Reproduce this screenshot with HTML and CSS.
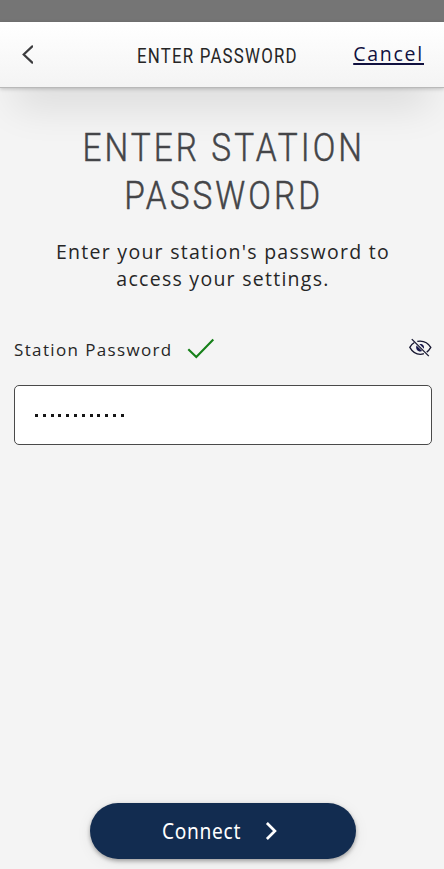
FILE: index.html
```html
<!DOCTYPE html>
<html lang="en">
<head>
<meta charset="utf-8">
<meta name="viewport" content="width=device-width, initial-scale=1">
<title>Enter Password</title>
<link rel="stylesheet" href="styles.css">
</head>
<body>
<div class="screen">
  <div class="status-bar"></div>
  <header class="nav">
    <svg class="back" viewBox="0 0 12 20" width="12" height="20"><path d="M11.3 1.4 2.7 9.5 11.3 17.6"/></svg>
    <div class="nav-title"><span class="nav-text">ENTER PASSWORD</span></div>
    <a class="cancel">Cancel</a>
  </header>
  <main class="content">
    <h1 class="heading"><span class="line">ENTER STATION</span><span class="line">PASSWORD</span></h1>
    <p class="intro"><span>Enter your station's password to</span><br><span>access your settings.</span></p>
    <div class="label-row">
      <label class="label">Station Password</label>
      <svg class="check" viewBox="0 0 28 22" width="28" height="22"><path d="M1.3 11.2 9.3 19.1 26.3 1.5"/></svg>
      <svg class="eye" viewBox="0 0 24 20" width="24" height="20">
        <path d="M6.400 4.500C4.500 5.500 2.900 7.100 1.800 9.400 4.300 13.800 7.800 16.300 12.300 16.300c1.300 0 2.400-.2 3.600-.6M9.300 3.300c6-1 10.700 1.300 13.500 6.100-1.200 2.100-2.400 3.500-4.100 4.700"/>
        <path d="M8.500 7.400 14.200 13.100C10.500 14.500 7 11.300 8.500 7.400ZM11.300 6 16 10.700C16.600 7.500 14.500 5.500 11.300 6Z" class="iris"/>
        <path d="M3.800 1.100 20.800 18.100"/>
      </svg>
    </div>
    <div class="field"><div class="dots"><i></i><i></i><i></i><i></i><i></i><i></i><i></i><i></i><i></i><i></i><i></i><i></i></div></div>
  </main>
  <button class="connect"><span class="connect-text">Connect</span><svg viewBox="0 0 12 20" width="12" height="20"><path d="M1.900 2 9.900 10 1.900 18"/></svg></button>
</div>
</body>
</html>
```
FILE: styles.css
```css
* { box-sizing: border-box; }
body { margin: 0; background: #f4f4f4; font-family: "Open Sans", sans-serif; color: #262626; }
svg { display: block; fill: none; flex: none; }
.screen { height: 869px; display: flex; flex-direction: column; align-items: center; overflow: hidden; }
.status-bar { width: 100%; height: 22px; background: #757575; flex: none; }
.nav { width: 100%; height: 66px; flex: none; display: flex; align-items: center; padding: 0 20px 0 21px; background: linear-gradient(#fff, #f4f4f4); border-bottom: 1px solid #b9b9b9; box-shadow: 0 1px 4px #0003, 0 32px 40px -14px #0000001c; position: relative; z-index: 1; }
.back { stroke: #3c3c3e; stroke-width: 2.2; stroke-linecap: round; }
.nav-title { flex: 1; padding: 4px 0 0 104px; }
.nav-text { display: inline-block; font: 19.5px/26px Roboto, sans-serif; letter-spacing: 1.4px; white-space: nowrap; transform: scaleX(.863); transform-origin: left; }
.cancel { font-size: 19.5px; line-height: 26px; letter-spacing: 1.75px; color: #11113f; text-decoration: underline; text-underline-offset: 2px; text-decoration-thickness: 1.5px; margin-top: -1px; }
.content { width: 100%; flex: 1; padding: 36px 12px 0 14px; background: #f4f4f4; }
.heading { margin: 0; font: 300 39px/48px Roboto, sans-serif; letter-spacing: 3.6px; color: #444548; display: flex; flex-direction: column; align-items: center; position: relative; z-index: 2; -webkit-text-stroke: .5px #444548; }
.line { white-space: nowrap; transform: translateX(.5px) scaleX(.855); }
.intro { margin: 18px -6px 0 -6px; text-align: center; font-size: 19.5px; line-height: 27px; letter-spacing: 1.27px; white-space: nowrap; }
.label-row { display: flex; align-items: center; height: 28px; margin-top: 43px; }
.label { font-size: 17px; letter-spacing: 1.36px; white-space: nowrap; width: 173px; }
.check { stroke: #168019; stroke-width: 2.1; }
.eye { margin-left: auto; margin-top: -2px; stroke: #15152f; stroke-width: 1.3; }
.iris { fill: #17174c; stroke: none; }
.field { height: 60px; margin-top: 22px; padding-left: 20px; border: 1px solid #4a4a4a; border-radius: 5px; background: #fff; display: flex; align-items: center; }
.dots { display: flex; gap: 4.8px; margin-top: 1px; }
.dots i { width: 3px; height: 3px; background: #151515; }
.connect { width: 266px; height: 56px; flex: none; margin: 0 0 10px 2px; border: 0; border-radius: 28px; background: #122c50; box-shadow: 0 2px 4px #0005, 0 3px 16px #0001; color: #fff; display: flex; align-items: center; padding: 0 0 0 72px; }
.connect-text { font: 22px/28px "Noto Sans", sans-serif; letter-spacing: .8px; width: 103px; text-align: left; margin-top: -2px; transform: scaleX(.87); transform-origin: left; }
.connect svg { stroke: #fff; stroke-width: 2.7; }
```
